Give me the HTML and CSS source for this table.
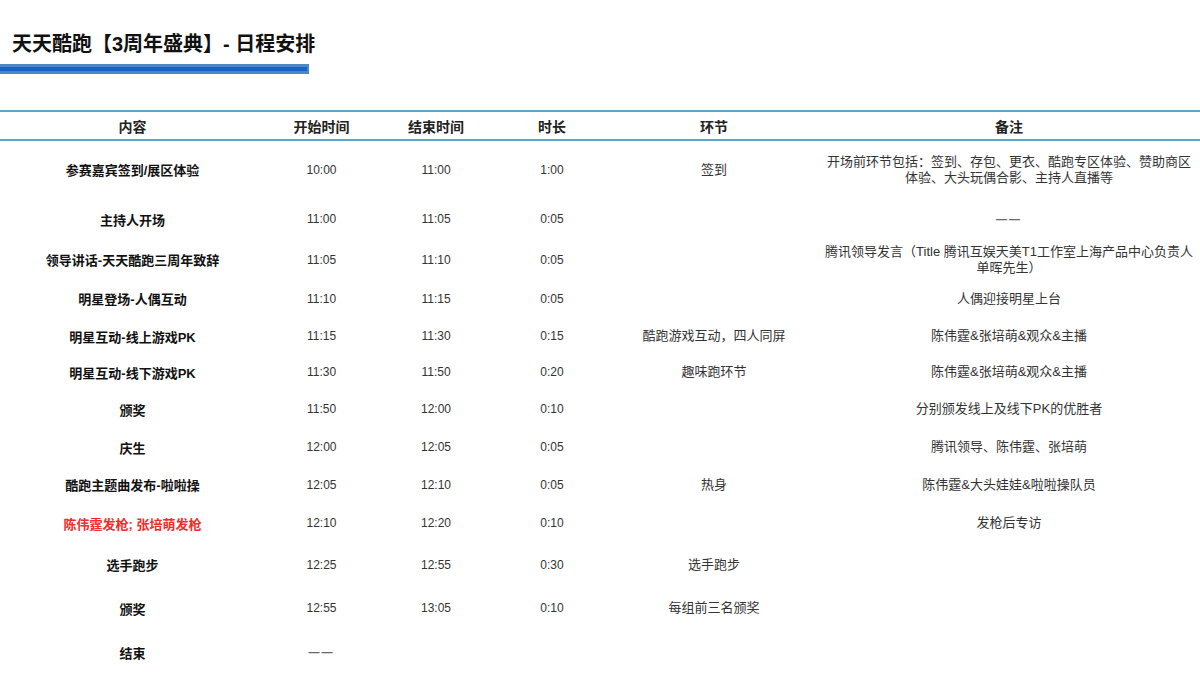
FILE: index.html
```html
<!DOCTYPE html>
<html lang="zh-CN">
<head>
<meta charset="utf-8">
<title>天天酷跑【3周年盛典】- 日程安排</title>
<link rel="stylesheet" href="styles.css">
</head>
<body>
<div class="page">
  <header class="head">
    <h1 class="title">天天酷跑【3周年盛典】- 日程安排</h1>
    <div class="bar"><div class="bar-inner"></div></div>
  </header>
  <table class="sched">
    <colgroup>
      <col class="c1"><col class="c2"><col class="c3"><col class="c4"><col class="c5"><col class="c6">
    </colgroup>
    <thead>
      <tr><th>内容</th><th>开始时间</th><th>结束时间</th><th>时长</th><th>环节</th><th>备注</th></tr>
    </thead>
    <tbody>
      <tr class="h58"><td class="name">参赛嘉宾签到/展区体验</td><td class="num">10:00</td><td class="num">11:00</td><td class="num">1:00</td><td class="txt">签到</td><td class="txt">开场前环节包括：签到、存包、更衣、酷跑专区体验、赞助商区<br>体验、大头玩偶合影、主持人直播等</td></tr>
      <tr class="h42"><td class="name">主持人开场</td><td class="num">11:00</td><td class="num">11:05</td><td class="num">0:05</td><td class="txt"></td><td class="txt"><span class="dash">——</span></td></tr>
      <tr class="h39"><td class="name">领导讲话-天天酷跑三周年致辞</td><td class="num">11:05</td><td class="num">11:10</td><td class="num">0:05</td><td class="txt"></td><td class="txt">腾讯领导发言（Title 腾讯互娱天美T1工作室上海产品中心负责人<br>单晖先生）</td></tr>
      <tr class="h39"><td class="name">明星登场-人偶互动</td><td class="num">11:10</td><td class="num">11:15</td><td class="num">0:05</td><td class="txt"></td><td class="txt">人偶迎接明星上台</td></tr>
      <tr class="h36"><td class="name">明星互动-线上游戏PK</td><td class="num">11:15</td><td class="num">11:30</td><td class="num">0:15</td><td class="txt">酷跑游戏互动，四人同屏</td><td class="txt">陈伟霆&amp;张培萌&amp;观众&amp;主播</td></tr>
      <tr class="h36"><td class="name">明星互动-线下游戏PK</td><td class="num">11:30</td><td class="num">11:50</td><td class="num">0:20</td><td class="txt">趣味跑环节</td><td class="txt">陈伟霆&amp;张培萌&amp;观众&amp;主播</td></tr>
      <tr class="h38"><td class="name">颁奖</td><td class="num">11:50</td><td class="num">12:00</td><td class="num">0:10</td><td class="txt"></td><td class="txt">分别颁发线上及线下PK的优胜者</td></tr>
      <tr class="h38"><td class="name">庆生</td><td class="num">12:00</td><td class="num">12:05</td><td class="num">0:05</td><td class="txt"></td><td class="txt">腾讯领导、陈伟霆、张培萌</td></tr>
      <tr class="h37"><td class="name">酷跑主题曲发布-啦啦操</td><td class="num">12:05</td><td class="num">12:10</td><td class="num">0:05</td><td class="txt">热身</td><td class="txt">陈伟霆&amp;大头娃娃&amp;啦啦操队员</td></tr>
      <tr class="h40"><td class="name red">陈伟霆发枪; 张培萌发枪</td><td class="num">12:10</td><td class="num">12:20</td><td class="num">0:10</td><td class="txt"></td><td class="txt">发枪后专访</td></tr>
      <tr class="h43"><td class="name">选手跑步</td><td class="num">12:25</td><td class="num">12:55</td><td class="num">0:30</td><td class="txt">选手跑步</td><td class="txt"></td></tr>
      <tr class="h44"><td class="name">颁奖</td><td class="num">12:55</td><td class="num">13:05</td><td class="num">0:10</td><td class="txt">每组前三名颁奖</td><td class="txt"></td></tr>
      <tr class="h44"><td class="name">结束</td><td class="num"><span class="dash">——</span></td><td class="num"></td><td class="num"></td><td class="txt"></td><td class="txt"></td></tr>
    </tbody>
  </table>
</div>
</body>
</html>
```
FILE: styles.css
```css
html, body {
  margin: 0;
  padding: 0;
  background: #ffffff;
}
body {
  font-family: "Liberation Sans", "Noto Sans CJK SC", sans-serif;
  color: #222;
}
.page {
  width: 1200px;
  height: 675px;
  overflow: hidden;
}
.head {
  padding-top: 31px;
  height: 110px;
  box-sizing: border-box;
}
.title {
  margin: 0 0 0 12px;
  font-family: "Liberation Sans", "Noto Sans CJK SC", sans-serif;
  font-size: 20px;
  line-height: 26px;
  font-weight: bold;
  color: #111;
}
.bar {
  margin-top: 7px;
  width: 309px;
  height: 10px;
  box-sizing: border-box;
  background: #4f86c6;
  padding: 3px 2px 3px 0;
}
.bar-inner {
  height: 4px;
  background: #1565c0;
}
.sched {
  width: 1200px;
  border-collapse: collapse;
  table-layout: fixed;
}
.c1 { width: 265px; }
.c2 { width: 113px; }
.c3 { width: 116px; }
.c4 { width: 116px; }
.c5 { width: 208px; }
.c6 { width: 382px; }
.sched thead th {
  height: 27px;
  padding: 0;
  border-top: 2px solid #5ba6c6;
  border-bottom: 2px solid #5ba6c6;
  font-family: "Liberation Sans", "Noto Sans CJK SC", sans-serif;
  font-size: 14px;
  font-weight: bold;
  color: #222;
  text-align: center;
  vertical-align: middle;
}
.sched td {
  padding: 0;
  text-align: center;
  vertical-align: middle;
}
.h58 { height: 58px; }
.h44 { height: 44px; }
.h43 { height: 43px; }
.h42 { height: 42px; }
.h40 { height: 40px; }
.h39 { height: 39px; }
.h38 { height: 38px; }
.h37 { height: 37px; }
.h36 { height: 36px; }
.name {
  font-size: 13px;
  font-weight: bold;
  color: #111;
}
.name.red {
  color: #f52a2a;
}
.num {
  font-size: 12px;
  color: #333;
}
.txt {
  font-size: 13px;
  line-height: 16px;
  color: #333;
}
.dash {
  display: inline-block;
  font-family: "Liberation Sans", sans-serif;
  font-weight: bold;
  font-size: 11px;
  letter-spacing: 2px;
  color: #6a6a6a;
}
```
